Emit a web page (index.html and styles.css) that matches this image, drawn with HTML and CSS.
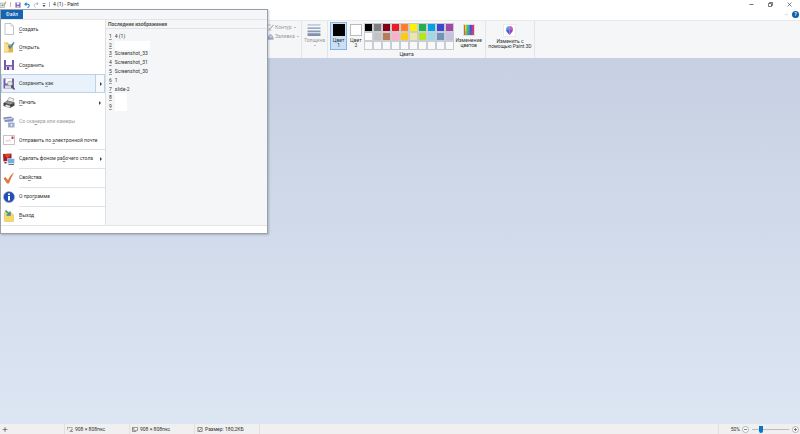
FILE: index.html
```html
<!DOCTYPE html>
<html lang="ru">
<head>
<meta charset="utf-8">
<title>4 (1) - Paint</title>
<link rel="stylesheet" href="styles.css">
</head>
<body>
<header class="titlebar">
  <svg class="app-icon" viewBox="0 0 14 14"><path d="M0 4h9v9H0z" fill="#dce6ee" stroke="#8b9aa5"/><path d="M2 10l3-4 3 4z" fill="#85a86c"/><path d="M7 9l4-8 2 1-4 8z" fill="#c9a35f"/></svg>
  <span class="bar gold"></span>
  <button class="quick" aria-label="Сохранить"><svg viewBox="0 0 14 14"><path d="M1 1h12v12H1z" fill="#7d65b0"/><path d="M4 1h6v5H4z" fill="#fff"/><path d="M4 9h6v4H4z" fill="#d9d2eb"/></svg></button>
  <button class="quick" aria-label="Отменить"><svg viewBox="0 0 14 14"><path d="M3 5h5c6 0 5 7 0 8" fill="none" stroke="#2588ce" stroke-width="2.5"/><path d="M0 5l6-5v10z" fill="#2588ce"/></svg></button>
  <button class="quick" aria-label="Вернуть"><svg viewBox="0 0 14 14"><path d="M10 4H7C1 4 2 11 6 13" fill="none" stroke="#a7adb3" stroke-width="1.8"/><path d="M13 4L9 0v8z" fill="#a7adb3"/></svg></button>
  <button class="quick more" aria-label="Настройка панели"><svg viewBox="0 0 8 12"><path d="M1 3h6v1H1zM1 6h6L4 10z" fill="#444"/></svg></button>
  <span class="bar"></span>
  <h1>4 (1) - Paint</h1>
  <div class="window-buttons">
    <button aria-label="Свернуть"><svg viewBox="0 0 10 10"><path d="M1 5h8" stroke="#333" stroke-width="1.4"/></svg></button>
    <button aria-label="Восстановить"><svg viewBox="0 0 10 10"><path d="M1 3h6v6H1zM3 3V1h6v6H7" fill="none" stroke="#333" stroke-width="1.3"/></svg></button>
    <button aria-label="Закрыть"><svg viewBox="0 0 10 10"><path d="M1 1l8 8M9 1L1 9" stroke="#333" stroke-width="1.2"/></svg></button>
  </div>
</header>

<div class="tabs">
  <button class="collapse" aria-label="Свернуть ленту"><svg viewBox="0 0 10 10"><path d="M2 6l3-2 3 2" fill="none" stroke="#aaa"/></svg></button>
  <button class="help" aria-label="Справка">?</button>
</div>

<section class="ribbon">
  <div class="group shapes">
    <button class="line-button"><svg viewBox="0 0 14 14"><path d="M8 2H1v10h8M4 10l9-8-7 9z" fill="none" stroke="#959eaf" stroke-width="1.2"/></svg>Контур<i class="caret"></i></button>
    <button class="line-button"><svg viewBox="0 0 14 14"><path d="M1 12h12M2 8l5-6 5 6-5 4z" fill="#c4cce0" stroke="#8895b5" stroke-width="1.3"/><path d="M1 9v4h12V9" fill="#9ba7c4"/></svg>Заливка<i class="caret"></i></button>
  </div>
  <div class="group thickness">
    <button class="tall"><svg viewBox="0 0 14 13"><path d="M0 1h14" stroke="#9aa8bf"/><path d="M0 4.5h14" stroke="#8c9bb4" stroke-width="1.5"/><path d="M0 8h14" stroke="#8c9bb4" stroke-width="2"/><path d="M0 11.5h14" stroke="#7f90ad" stroke-width="3"/></svg>Толщина<i class="caret"></i></button>
  </div>
  <div class="group colors">
    <div class="color-tools">
      <button class="tall pick selected"><span class="current black"></span>Цвет<br>1</button>
      <button class="tall pick"><span class="current"></span>Цвет<br>2</button>
      <div class="palette">
        <button style="background:#000" aria-label="Черный"></button><button style="background:#7f7f7f" aria-label="Серый"></button><button style="background:#880015" aria-label="Темно-красный"></button><button style="background:#ed1c24" aria-label="Красный"></button><button style="background:#ff7f27" aria-label="Оранжевый"></button><button style="background:#fff200" aria-label="Желтый"></button><button style="background:#22b14c" aria-label="Зеленый"></button><button style="background:#00a2e8" aria-label="Бирюзовый"></button><button style="background:#3f48cc" aria-label="Индиго"></button><button style="background:#a349a4" aria-label="Лиловый"></button>
        <button style="background:#fff" aria-label="Белый"></button><button style="background:#c3c3c3" aria-label="Светло-серый"></button><button style="background:#b97a57" aria-label="Коричневый"></button><button style="background:#ffaec9" aria-label="Розовый"></button><button style="background:#ffc90e" aria-label="Золотой"></button><button style="background:#efe4b0" aria-label="Светло-желтый"></button><button style="background:#b5e61d" aria-label="Травяной"></button><button style="background:#99d9ea" aria-label="Голубой"></button><button style="background:#7092be" aria-label="Сизый"></button><button style="background:#c8bfe7" aria-label="Бледно-лиловый"></button>
        <button aria-label="Пусто 1"></button><button aria-label="Пусто 2"></button><button aria-label="Пусто 3"></button><button aria-label="Пусто 4"></button><button aria-label="Пусто 5"></button><button aria-label="Пусто 6"></button><button aria-label="Пусто 7"></button><button aria-label="Пусто 8"></button><button aria-label="Пусто 9"></button><button aria-label="Пусто 10"></button>
      </div>
      <button class="tall edit"><span class="rainbow"></span>Изменение<br>цветов</button>
    </div>
    <div class="group-label">Цвета</div>
  </div>
  <div class="group paint3d">
    <button class="tall"><svg viewBox="0 0 26 26"><path d="M1 1h24v24H1z" fill="#fff" stroke="#ddd"/><path d="M13 4a7 7 0 0 0-7 7h7z" fill="#35b7e9"/><path d="M13 4a7 7 0 0 1 7 7h-7z" fill="#e0559c"/><path d="M6 11c0 5 4 6 5 9l2 2V10z" fill="#4062cf"/><path d="M20 11c0 5-4 6-5 9l-2 2V10z" fill="#8b46bd"/><circle cx="13" cy="10" r="3" fill="#9b77de"/></svg>Изменить с<br>помощью Paint 3D</button>
  </div>
</section>

<main class="workspace"></main>

<footer class="status">
  <div class="cell cursor"><svg viewBox="0 0 12 12"><path d="M6 0v12M0 6h12" stroke="#555" stroke-width="1.4"/><path d="M6 3l3 3-3 3-3-3z" fill="#777"/></svg></div>
  <div class="cell"><svg viewBox="0 0 14 12"><path d="M1 6V1h11v7H7" fill="none" stroke="#555" stroke-width="1.5" stroke-dasharray="3 1"/><path d="M6 11h7M10 8l3 3" stroke="#555" stroke-width="1.5"/></svg>908 × 808пкс</div>
  <div class="cell"><svg viewBox="0 0 14 12"><path d="M4 1h9v7H4z" fill="#fff" stroke="#555" stroke-width="1.5"/><path d="M1 1v10h9M0 2h3" fill="none" stroke="#555" stroke-width="1.5"/></svg>908 × 808пкс</div>
  <div class="cell"><svg viewBox="0 0 12 12"><path d="M1 1h10v10H1z" fill="#fff" stroke="#444" stroke-width="1.5"/><path d="M3 6l2 3 4-6" fill="none" stroke="#444" stroke-width="1.5"/></svg>Размер: 180,2КБ</div>
  <div class="zoom">
    <label for="zoom">50%</label>
    <button aria-label="Уменьшить"><svg viewBox="0 0 14 14"><circle cx="7" cy="7" r="6" fill="#fff" stroke="#777"/><path d="M4 7h6" stroke="#555" stroke-width="1.5"/></svg></button>
    <input id="zoom" type="range" min="0" max="100" value="20">
    <button aria-label="Увеличить"><svg viewBox="0 0 14 14"><circle cx="7" cy="7" r="6" fill="#fff" stroke="#777"/><path d="M4 7h6M7 4v6" stroke="#555" stroke-width="1.5"/></svg></button>
  </div>
</footer>

<section class="file-menu">
  <div class="menu-top"><button class="file-tab">Файл</button></div>
  <div class="menu-body">
    <nav class="commands">
      <button><svg viewBox="0 0 24 24"><path d="M4 1h12l5 5v17H4z" fill="#fff" stroke="#aaa" stroke-width="1.4"/><path d="M16 1v5h5" fill="#eee" stroke="#aaa"/></svg><span><u>С</u>оздать</span></button>
      <button><svg viewBox="0 0 24 24"><path d="M2 3h7l3 3h8v17H2z" fill="#e0b54b"/><path d="M2 3l9 4v16l-9-2z" fill="#f9df8b"/><path d="M11 9l3 5 8-11" fill="none" stroke="#3987c5" stroke-width="3"/></svg><span><u>О</u>ткрыть</span></button>
      <button><svg viewBox="0 0 24 24"><path d="M2 2h20v20H2z" fill="#765bad"/><path d="M6 2h12v10H6z" fill="#fff"/><path d="M6 15h12v7H6z" fill="#ddd7ec"/><path d="M8 16h4v6H8z" fill="#5a448a"/></svg><span>Со<u>х</u>ранить</span></button>
      <button class="large active"><svg viewBox="0 0 24 24"><path d="M1 1h21v20H1z" fill="#765bad"/><path d="M5 1h13v10H5z" fill="#fff"/><path d="M4 15h12v6H4z" fill="#ddd7ec"/><circle cx="14" cy="11" r="5" fill="#d5e8dc" stroke="#777"/><path d="M17 15l6 8" stroke="#555" stroke-width="3"/></svg><span>Сохранить <u>к</u>ак</span><b class="arrow"></b></button>
      <button class="large"><svg viewBox="0 0 24 24"><path d="M8 9l4-8 10 3-4 9z" fill="#f4f4f4" stroke="#777"/><path d="M1 12l8-5 14 4v6l-9 5-13-4z" fill="#444"/><path d="M2 11l8-3 12 4-8 3z" fill="#999"/><path d="M3 18l4-3 8 3-2 4z" fill="#ddd"/></svg><span><u>П</u>ечать</span><b class="arrow"></b></button>
      <button class="large disabled" disabled><svg viewBox="0 0 24 24"><path d="M0 3l15-2 7 4-2 6-16 1z" fill="#8593bd"/><path d="M3 7l16-2" stroke="#dce3f2" stroke-width="2"/><path d="M10 13h13v10H10z" fill="#a4afd0"/><circle cx="17" cy="18" r="3" fill="#e7ecf6" stroke="#7180ad"/></svg><span>Со ска<u>н</u>ера или камеры</span></button>
      <button><svg viewBox="0 0 24 24"><path d="M1 3h22v18H1z" fill="#fff" stroke="#b3a7ab" stroke-width="1.4"/><path d="M17 5h4v5h-4z" fill="#c73a42"/><path d="M5 16l3-4 2 3 3-4 2 4" fill="none" stroke="#c399ac"/></svg><span>Отправить по <u>э</u>лектронной почте</span></button>
      <button class="large ruled"><svg viewBox="0 0 24 24"><path d="M0 2l17-1v14L1 17z" fill="#a71c20"/><path d="M2 3l14-1-7 9z" fill="#d74a36"/><path d="M9 11h14v10H9z" fill="#71afe0" stroke="#edf5fa"/><path d="M11 23h11" stroke="#69727c" stroke-width="2"/><path d="M3 18h4v3H3z" fill="#444"/></svg><span>Сделать фоном ра<u>б</u>очего стола</span><b class="arrow"></b></button>
      <button class="large ruled"><svg viewBox="0 0 24 24"><path d="M1 13l4-3 5 6C13 9 17 4 22 1c-4 7-7 14-10 22H8z" fill="#df7945"/></svg><span>Сво<u>й</u>ства</span></button>
      <button class="large ruled"><svg viewBox="0 0 24 24"><circle cx="12" cy="12" r="11" fill="#214db4" stroke="#9aa9ce"/><path d="M10 10h4v9h-4zM10 5h4v3h-4z" fill="#fff"/></svg><span>О про<u>г</u>рамме</span></button>
      <button class="large ruled"><svg viewBox="0 0 24 24"><path d="M3 4h12l6 6v13H3z" fill="#f4d969" stroke="#d4b853"/><path d="M5 1l8 8M14 3v7H7" fill="none" stroke="#398fa5" stroke-width="3"/></svg><span><u>В</u>ыход</span></button>
    </nav>
    <div class="recent">
      <h2>Последние изображения</h2>
      <div class="recent-list">
        <a href="#"><u>1</u>4 (1)</a>
        <a href="#"><u>2</u><span class="blank wide"></span></a>
        <a href="#"><u>3</u>Screenshot_33</a>
        <a href="#"><u>4</u>Screenshot_31</a>
        <a href="#"><u>5</u>Screenshot_30</a>
        <a href="#"><u>6</u>1</a>
        <a href="#"><u>7</u>slide-2</a>
        <a href="#"><u>8</u><span class="blank"></span></a>
        <a href="#"><u>9</u><span class="blank"></span></a>
      </div>
    </div>
  </div>
  <div class="menu-foot"></div>
</section>
</body>
</html>
```
FILE: styles.css
```css
* { box-sizing: border-box; }
body {
  margin: 0;
  min-height: 100vh;
  display: flex;
  flex-direction: column;
  position: relative;
  background: #fff;
  color: #333;
  font: 5px/5px Roboto, "Noto Sans", sans-serif;
}
button {
  border: 0;
  padding: 0;
  margin: 0;
  background: none;
  color: inherit;
  font: inherit;
}
svg { display: block; flex: none; }
h1, h2 { margin: 0; font-size: 5px; }
h1 { font-weight: 400; color: #222; }
u { text-underline-offset: 1px; text-decoration-thickness: 1px; text-decoration-color: #999; }

.titlebar { height: 9px; display: flex; align-items: center; gap: 3px; }
.app-icon { width: 7px; height: 7px; }
.bar { width: 1px; height: 5px; background: #bbb; }
.bar.gold { background: #d8bd82; margin-right: 1px; }
.quick svg { width: 6px; height: 6px; }
.more svg { width: 4px; }
.window-buttons { margin-left: auto; display: flex; gap: 14px; padding-right: 8px; }
.window-buttons svg { width: 5px; height: 5px; }

.tabs { height: 11px; display: flex; align-items: center; justify-content: flex-end; gap: 3px; padding-right: 1px; }
.collapse svg { width: 5px; height: 5px; }
.help { width: 7px; height: 7px; border-radius: 50%; background: #0c61ae; color: #fff; font-weight: 700; }

.ribbon { height: 38px; display: flex; padding-left: 267px; background: #f5f6f7; border-top: 1px solid #e7e9eb; }
.group { border-right: 1px solid #e3e6e9; flex: none; }
.shapes { width: 35px; color: #999; padding-top: 2px; }
.line-button { display: flex; align-items: center; height: 9px; gap: 1px; white-space: nowrap; }
.line-button svg { width: 7px; height: 7px; }
.caret { width: 0; height: 0; border: 1px solid transparent; border-top-color: #888; margin: 1px 0 0 1px; }
.tall { display: flex; flex-direction: column; align-items: center; text-align: center; white-space: nowrap; }
.thickness { width: 26px; color: #999; display: flex; justify-content: center; align-items: flex-start; padding-top: 3px; }
.thickness svg { width: 14px; height: 12px; margin-bottom: 2px; }
.thickness .caret { margin-top: 2px; }
.colors { width: 158px; padding: 1px 2px 0; }
.color-tools { display: flex; align-items: flex-start; height: 28px; }
.pick { width: 18px; height: 28px; display: block; border: 1px solid transparent; }
.pick.selected { background: #c9e0f7; border-color: #84b5e5; }
.current { display: block; width: 10px; height: 10px; margin: 1px auto 3px; background: #fff; outline: 1px solid #bbb; }
.current.black { width: 12px; height: 12px; margin: 0 auto 2px; background: #000; outline: 0; }
.palette { display: grid; grid-template-columns: repeat(10, 9px); grid-auto-rows: 9px; margin-top: 1px; }
.palette button { border: 1px solid #f7f8f9; outline: 1px solid #c9cdd1; outline-offset: -1px; background: #f8f9fa; }
.edit { display: block; width: 30px; padding-top: 2px; }
.rainbow { display: block; width: 12px; height: 12px; margin: 0 auto 2px; background: linear-gradient(transparent 30%, #7778), linear-gradient(90deg, #e22b24, #dce83b, #39cb55, #21afe1, #403ee0, #d929b9, #e33); border: 1px solid #ddd; }
.group-label { text-align: center; padding-top: 2px; }
.paint3d { width: 49px; display: flex; justify-content: center; align-items: flex-start; padding-top: 3px; }
.paint3d .tall { display: block; }
.paint3d svg { width: 13px; height: 13px; margin: 0 auto 2px; }

.workspace { flex: 1; background: linear-gradient(#c6d0e2, #dce6f3); }

.status { height: 10px; display: flex; background: #f0f0f0; }
.cell { width: 65px; display: flex; align-items: center; gap: 2px; padding-left: 2px; border-right: 1px solid #e0e0e0; white-space: nowrap; }
.cell svg { width: 6px; height: 5px; }
.zoom { margin-left: auto; display: flex; align-items: center; padding: 0 1px 0 12px; border-left: 1px solid #e0e0e0; }
.zoom label { margin-right: 2px; }
.zoom svg { width: 7px; height: 7px; }
.zoom input { appearance: none; width: 37px; height: 7px; margin: 0 3px; background: linear-gradient(#bbb, #bbb) center / 100% 1px no-repeat; }
.zoom input::-webkit-slider-thumb { appearance: none; width: 4px; height: 7px; background: #0875ca; border-radius: 0 0 2px 2px; }

.file-menu { position: absolute; left: 0; top: 9px; width: 268px; border: 1px solid #9aa0aa; background: #fff; box-shadow: 1px 1px 2px #0003; }
.menu-top { height: 10px; background: #f5f6f7; border-bottom: 1px solid #e2e4e8; }
.file-tab { display: block; width: 22px; height: 9px; background: #1464b1; color: #fff; }
.menu-body { display: flex; border-bottom: 1px solid #e2e4e8; }
.commands { width: 105px; border-right: 1px solid #dde1e5; }
.commands button { display: flex; align-items: center; width: 100%; height: 18px; padding-left: 2px; gap: 4px; text-align: left; white-space: nowrap; }
.commands svg { width: 12px; height: 12px; }
.commands .large { height: 19px; }
.commands .active { background: #e9f1fb; outline: 1px solid #bcd2ea; outline-offset: -1px; }
.commands .disabled { color: #999; }
.ruled { background: linear-gradient(#dfe2e6, #dfe2e6) 18px 0 / 100% 1px no-repeat; }
.arrow { margin-left: auto; width: 10px; height: 17px; display: grid; place-items: center; }
.active .arrow { background: #f7fafd; border-left: 1px solid #bcd2ea; }
.arrow::before { content: ""; border: 2px solid transparent; border-left-color: #444; border-right: 0; }
.recent { flex: 1; background: #f5f6f7; }
.recent h2 { height: 9px; padding: 2px; border-bottom: 1px solid #dfe2e6; color: #555; }
.recent-list { display: grid; grid-auto-rows: 1fr; height: 79px; margin-top: 3px; padding-left: 3px; }
.recent-list a { display: flex; align-items: center; gap: 3px; color: inherit; text-decoration: none; }
.blank { align-self: stretch; width: 12px; background: #fff; }
.blank.wide { width: 35px; }
.menu-foot { height: 7px; }
```
